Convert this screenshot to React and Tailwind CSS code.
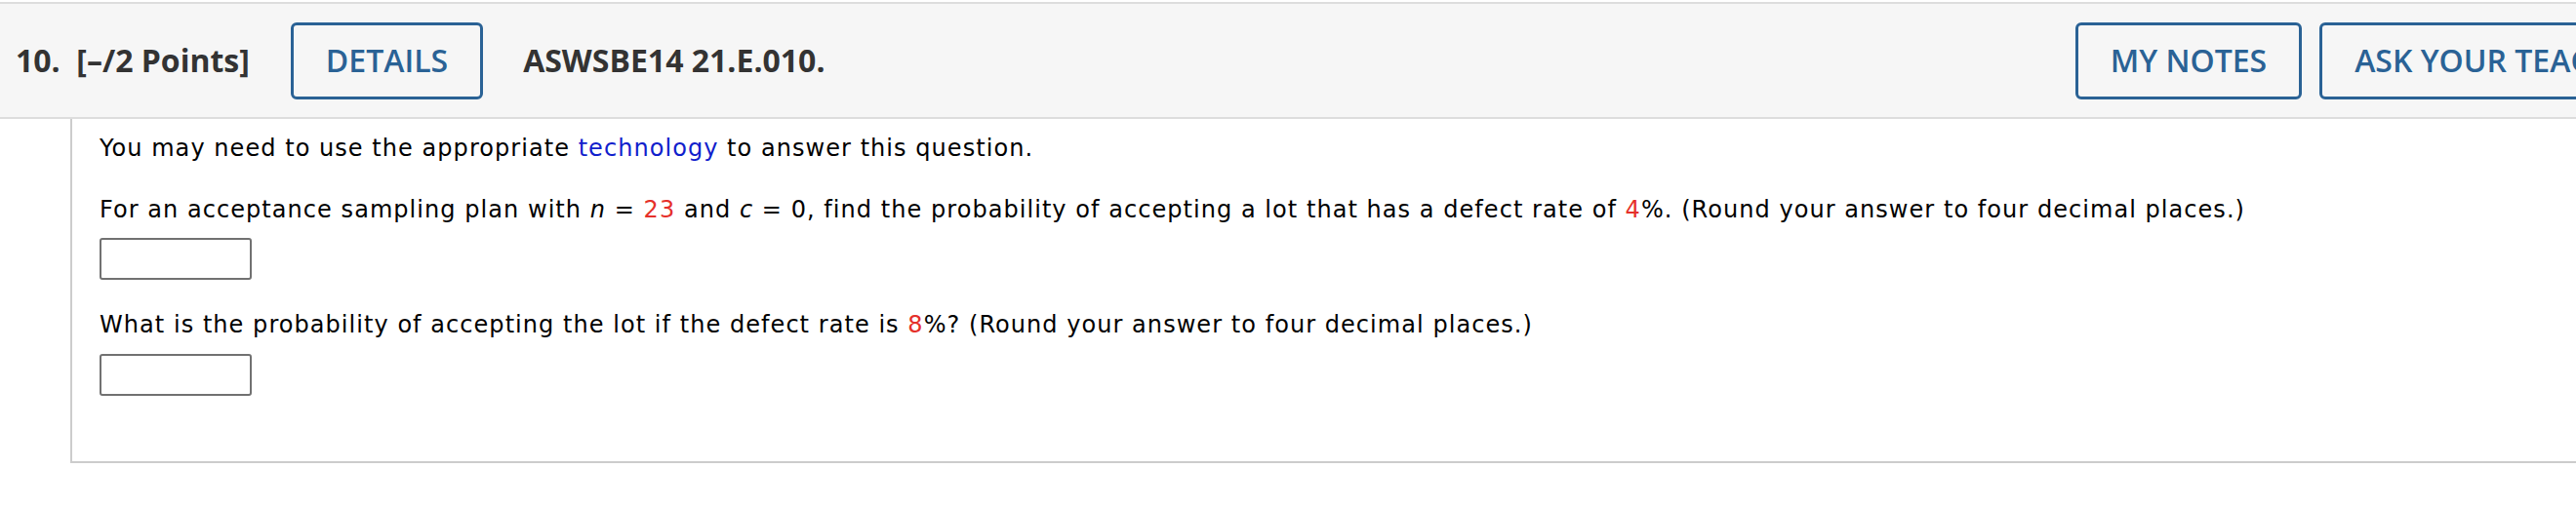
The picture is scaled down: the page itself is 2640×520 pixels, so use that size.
import React from 'react'

// WebAssign-style question header + body, drawn at 2x scale
const HEAD_FONT = { fontFamily: '"Open Sans", "Liberation Sans", sans-serif' }
const BODY_FONT = { fontFamily: '"DejaVu Sans", Verdana, sans-serif' }

function OutlineButton({ children }) {
  return (
    <button className="h-[79px] shrink-0 rounded-[6px] border-[3px] border-[#2a6295] bg-transparent px-[33px] text-[32px] font-semibold leading-none text-[#2a6295]">
      {children}
    </button>
  )
}

function AnswerBox() {
  return <div className="h-[43px] w-[156px] rounded-[3px] border-2 border-[#717171] bg-white" />
}

const Red = ({ children }) => <span className="text-[#e5302a]">{children}</span>

export default function App() {
  return (
    <div className="w-[2640px] h-[520px] overflow-hidden bg-white">
      <div className="w-[2769px] pt-[2px]" style={HEAD_FONT}>
        <div className="flex h-[120px] items-center border-y-2 border-[#dddddd] bg-[#f6f6f6] pl-[16px] pr-[16px]">
          <div className="text-[32px] font-bold text-[#333333]">
            10.&nbsp; [–/2 Points]
          </div>
          <div className="ml-[42px]">
            <OutlineButton>DETAILS</OutlineButton>
          </div>
          <div className="ml-[41px] text-[32px] font-bold text-[#333333]">ASWSBE14 21.E.010.</div>
          <div className="flex-1" />
          <div className="flex gap-[18px]">
            <OutlineButton>MY NOTES</OutlineButton>
            <OutlineButton>ASK YOUR TEACHER</OutlineButton>
          </div>
        </div>

        <div
          className="ml-[72px] h-[353px] border-b-2 border-l-2 border-[#cccccc] pl-[28px] pt-[16px] text-[24px] leading-[28px] tracking-[1.05px] text-black"
          style={BODY_FONT}
        >
          <p>
            You may need to use the appropriate <span className="text-[#1020cc]">technology</span> to answer this question.
          </p>
          <p className="mt-[35px]">
            For an acceptance sampling plan with <i>n</i> = <Red>23</Red> and <i>c</i> = 0, find the probability of
            accepting a lot that has a defect rate of <Red>4</Red>%. (Round your answer to four decimal places.)
          </p>
          <div className="mt-[15px]">
            <AnswerBox />
          </div>
          <p className="mt-[32px]">
            What is the probability of accepting the lot if the defect rate is <Red>8</Red>%? (Round your answer to four
            decimal places.)
          </p>
          <div className="mt-[16px]">
            <AnswerBox />
          </div>
        </div>
      </div>
    </div>
  )
}
